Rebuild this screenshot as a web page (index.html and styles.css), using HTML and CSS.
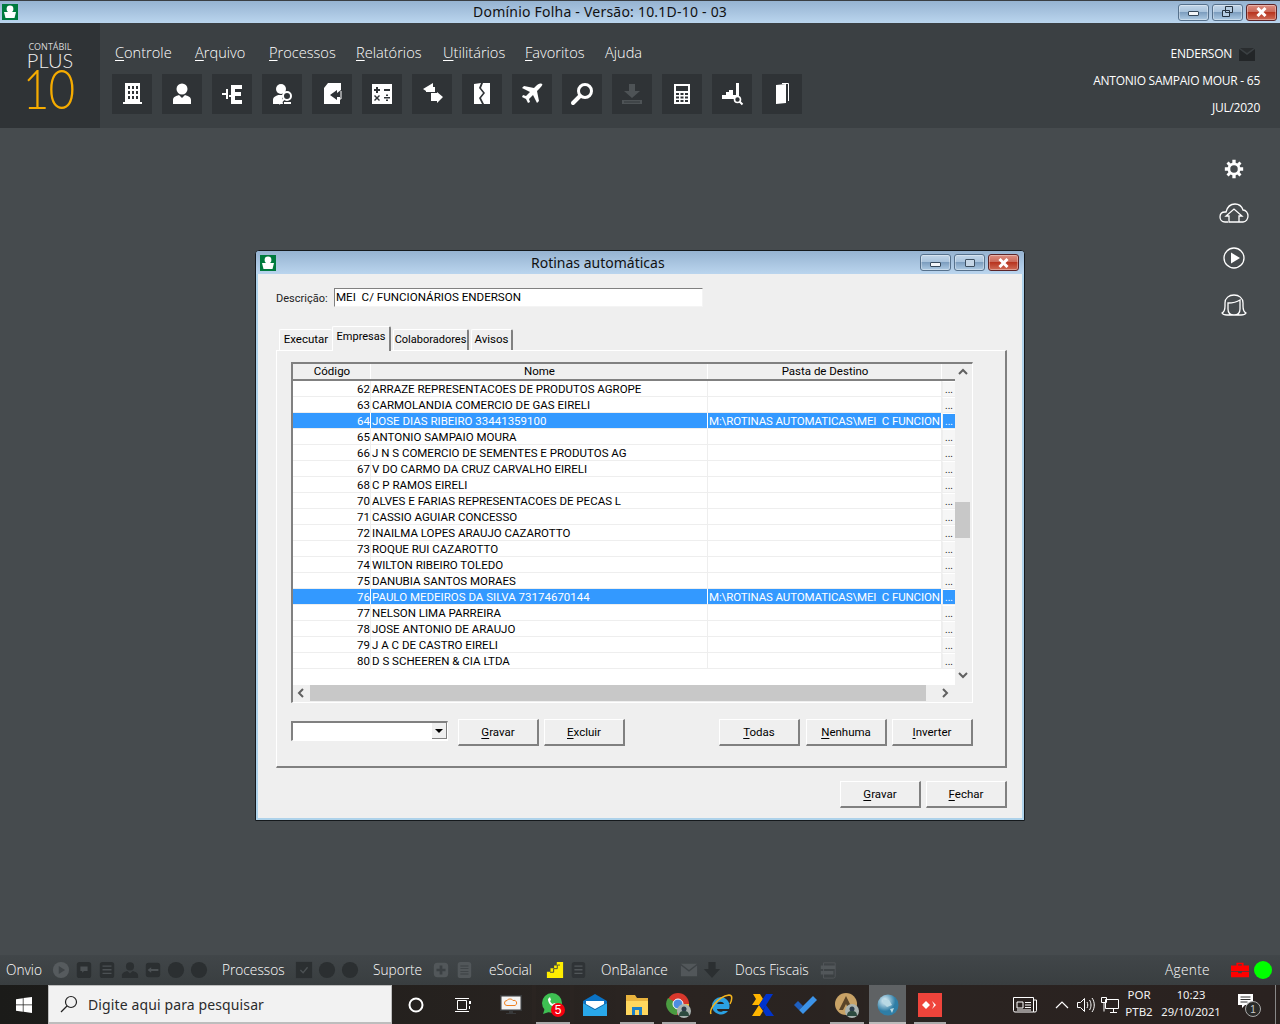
FILE: index.html
```html
<!DOCTYPE html>
<html lang="pt-BR">
<head>
<meta charset="utf-8">
<title>Domínio Folha</title>
<link rel="stylesheet" href="styles.css">
</head>
<body>
<div class="app">
  <div class="titlebar">
    <svg class="appicon" viewBox="0 0 16 16"><rect width="16" height="16" fill="#007a3d"/><circle cx="8" cy="5" r="3.4" fill="#fff"/><path d="M2 8h12l-1.5 6h-9z" fill="#fff"/></svg>
    <div class="title-text">Domínio Folha - Versão: 10.1D-10 - 03</div>
    <div class="winbtns">
      <div class="wb"><span class="wb-min"></span></div>
      <div class="wb"><svg width="14" height="12" viewBox="0 0 14 12"><path d="M4.500 .5h7v6h-7zM1.500 4.500h7v6h-7z" fill="#b6cde2" stroke="#26323f"/></svg></div>
      <div class="wb wb-close"><svg width="13" height="10" viewBox="0 0 13 10"><path d="M2.500 1l8 8M10.500 1l-8 8" stroke="#fff" stroke-width="3"/></svg></div>
    </div>
  </div>

  <header class="header">
    <div class="logo">
      <div class="logo-a">CONTÁBIL</div>
      <div class="logo-b">PLUS</div>
      <div class="logo-c">10</div>
    </div>
    <div class="menu-area">
      <nav class="menu">
        <span><u>C</u>ontrole</span><span><u>A</u>rquivo</span><span><u>P</u>rocessos</span><span><u>R</u>elatórios</span><span><u>U</u>tilitários</span><span><u>F</u>avoritos</span><span>Ajuda</span>
      </nav>
      <div class="tools">
        <div class="tool"><svg viewBox="0 0 40 40"><path fill="#fff" fill-rule="evenodd" d="M13 9h15v19h2v2H11v-2h2zM16 12v3h2v-3zM20 12v3h2v-3zM24 12v3h2v-3zM16 17v3h2v-3zM20 17v3h2v-3zM24 17v3h2v-3zM16 22v3h2v-3zM20 22v3h2v-3zM24 22v3h2v-3z"/></svg></div>
        <div class="tool"><svg viewBox="0 0 40 40"><circle cx="20" cy="15" r="5.500" fill="#fff"/><path fill="#fff" d="M11 30v-4c0-3 3-4 6-5l3 3 3-3c3 1 6 2 6 5v4z"/></svg></div>
        <div class="tool"><svg viewBox="0 0 40 40"><path fill="#fff" d="M19 11h11v4h-7v3h6v4h-6v4h7v4H19v-7h-2v-2h2zM10 19h4v-4h2v10h-2v-4h-4z"/></svg></div>
        <div class="tool"><svg viewBox="0 0 40 40"><circle cx="19" cy="15" r="5" fill="#fff"/><path fill="#fff" d="M11 30v-4c0-3 3-4 5-5h5l-1 5 1 4z"/><circle cx="25" cy="22" r="4" fill="none" stroke="#fff" stroke-width="2"/><path d="M22 25l-5 5" stroke="#fff" stroke-width="2"/><path fill="#fff" d="M22 28h7v2h-7z"/></svg></div>
        <div class="tool"><svg viewBox="0 0 40 40"><path fill="#fff" d="M16 9h13v7l-4 3v-3l-7 5 7 5v-3h3v7H12V14z"/><path fill="none" stroke="#fff" d="M29 17v8h-4"/></svg></div>
        <div class="tool"><svg viewBox="0 0 40 40"><path fill="#fff" fill-rule="evenodd" d="M10 10h20v20H10zM14 13v2h-2v2h2v2h2v-2h2v-2h-2v-2zM22 15v2h6v-2zM12 22l2 2-2 2 1 1 2-2 2 2 1-1-2-2 2-2-1-1-2 2-2-2zM22 23v1.500h6V23zM24 20.500v1.500h2v-1.500zM24 25.500v1.500h2v-1.500z"/></svg></div>
        <div class="tool"><svg viewBox="0 0 40 40"><path fill="#fff" d="M21 9l-10 6 3 2v1h9v-5h-2zM19 19h6v-1l6 5-6 6v-2h-6z"/></svg></div>
        <div class="tool"><svg viewBox="0 0 40 40"><path fill="#fff" d="M12 10l7-1-2 5 4 5-4 5 3 6-8 0zM21 9h7v21h-6l-3-6 4-5-4-5z"/></svg></div>
        <div class="tool"><svg viewBox="0 0 40 40"><path fill="#fff" d="M30 10c-2-1-4 0-6 2l-2 2-10-2-2 2 8 4-4 4-3-1-1 2 4 2 2 4 2-1-1-3 4-4 4 8 2-2-2-10 3-3c2-2 3-4 2-4z"/></svg></div>
        <div class="tool"><svg viewBox="0 0 40 40"><circle cx="23" cy="17" r="6.500" fill="none" stroke="#fff" stroke-width="3"/><path d="M18 22l-7 7" stroke="#fff" stroke-width="4" stroke-linecap="round"/></svg></div>
        <div class="tool"><svg viewBox="0 0 40 40"><path fill="#4e5356" d="M17 10h6v7h5l-8 7-8-7h5zM10 26h20v4H10z"/><path fill="#33383a" d="M12 27.500h16v1H12z"/></svg></div>
        <div class="tool"><svg viewBox="0 0 40 40"><path fill="#fff" fill-rule="evenodd" d="M12 10h16v20H12zM14 12v5h12v-5zM14 19v2h3v-2zM18.500 19v2h3v-2zM23 19v2h3v-2zM14 22.500v2h3v-2zM18.500 22.500v2h3v-2zM23 22.500v2h3v-2zM14 26v2h3v-2zM18.500 26v2h3v-2zM23 26v2h3v-2z"/></svg></div>
        <div class="tool"><svg viewBox="0 0 40 40"><path fill="#fff" d="M10 21h4v-3h3v-2h4v5h3V9h3v14H10v-2zM10 23h13v2H10z"/><circle cx="25.500" cy="25.500" r="3" fill="none" stroke="#fff" stroke-width="1.600"/><path d="M27.500 27.500l3 3" stroke="#fff" stroke-width="2"/></svg></div>
        <div class="tool"><svg viewBox="0 0 40 40"><path fill="#fff" d="M14 11l10-1v19l-10 1z"/><path fill="none" stroke="#fff" d="M20 9.500h6.500V27"/></svg></div>
      </div>
    </div>
    <div class="session">
      <div class="user">ENDERSON <svg class="mail" viewBox="0 0 16 13"><path fill="#232628" d="M0 1l8 6 8-6v12H0z"/><path fill="#2a2d2f" d="M1 0h14L8 5z"/></svg></div>
      <div>ANTONIO SAMPAIO MOUR - 65</div>
      <div>JUL/2020</div>
    </div>
  </header>

  <main class="desk">
    <div class="side">
      <svg class="s-gear" width="20" height="20" viewBox="0 0 24 24"><path fill="#fff" fill-rule="evenodd" d="M10 1h4v3.500l2 .8L18.500 3 21 5.500 18.700 8l.8 2H23v4h-3.500l-.8 2 2.300 2.500-2.500 2.500-2.500-2.300-2 .8V23h-4v-3.500l-2-.8L5.500 21 3 18.500 5.300 16l-.8-2H1v-4h3.500l.8-2L3 5.500 5.500 3 8 5.300l2-.8zM12 7.500a4.500 4.500 0 100 9 4.500 4.500 0 000-9z"/></svg>
      <svg class="s-cloud" width="30" height="20" viewBox="0 0 30 20"><path fill="none" stroke="#fff" stroke-width="1.300" d="M9 19H6c-3 0-5-2-5-5s2-5 5-5h1c1-4 4-8 9-8 4 0 7 3 8 6 3 0 5 3 5 6s-2 6-5 6h-6M10 19v-6H7l8-7 8 7h-3v6z"/></svg>
      <svg class="s-play" width="22" height="22" viewBox="0 0 22 22"><circle cx="11" cy="11" r="10" fill="none" stroke="#fff" stroke-width="1.300"/><path fill="#fff" d="M8 5.500l9 5.500-9 5.500z"/></svg>
      <svg class="s-head" width="26" height="22" viewBox="0 0 26 22"><path fill="none" stroke="#fff" stroke-width="1.300" d="M4 12V9c0-5 4-8 9-8s9 3 9 8v3c0 3 1 6 3 7-1 2-3 2-5 2H6c-2 0-4 0-5-2 2-1 3-4 3-7zM7 9c5 0 9-1 12-3v9c0 4-2 6-6 6s-6-2-6-6z"/></svg>
    </div>

    <section class="dialog">
      <div class="dlg-in">
        <div class="dlg-title">
          <svg class="appicon" viewBox="0 0 16 16"><rect width="16" height="16" fill="#007a3d"/><circle cx="8" cy="5" r="3.400" fill="#fff"/><path d="M2 8h12l-1.500 6h-9z" fill="#fff"/></svg>
          <div class="dlg-title-text">Rotinas automáticas</div>
          <div class="winbtns dlg-btns">
            <div class="wb"><span class="wb-min"></span></div>
            <div class="wb"><span class="wb-max"></span></div>
            <div class="wb wb-close"><svg width="13" height="10" viewBox="0 0 13 10"><path d="M2.500 1l8 8M10.500 1l-8 8" stroke="#fff" stroke-width="3"/></svg></div>
          </div>
        </div>
        <div class="dlg-body">
          <div class="desc-row"><label class="desc-label">Descrição:</label><div class="desc-input">MEI&nbsp; C/ FUNCIONÁRIOS ENDERSON</div></div>
          <div class="tabs">
            <div class="tab t1">Executar</div>
            <div class="tab t2">Empresas</div>
            <div class="tab t3">Colaboradores</div>
            <div class="tab t4">Avisos</div>
          </div>
          <div class="panel">
            <div class="tbl">
              <div class="tbl-main">
                <div class="row head"><div>Código</div><div>Nome</div><div>Pasta de Destino</div><div></div></div>
                <div class="row"><div class="c">62</div><div>ARRAZE REPRESENTACOES DE PRODUTOS AGROPE</div><div></div><div class="dots">...</div></div>
                <div class="row"><div class="c">63</div><div>CARMOLANDIA COMERCIO DE GAS EIRELI</div><div></div><div class="dots">...</div></div>
                <div class="row sel"><div class="c">64</div><div>JOSE DIAS RIBEIRO 33441359100</div><div class="path">M:\ROTINAS AUTOMATICAS\MEI&nbsp; C FUNCION</div><div class="dots">...</div></div>
                <div class="row"><div class="c">65</div><div>ANTONIO SAMPAIO MOURA</div><div></div><div class="dots">...</div></div>
                <div class="row"><div class="c">66</div><div>J N S COMERCIO DE SEMENTES E PRODUTOS AG</div><div></div><div class="dots">...</div></div>
                <div class="row"><div class="c">67</div><div>V DO CARMO DA CRUZ CARVALHO EIRELI</div><div></div><div class="dots">...</div></div>
                <div class="row"><div class="c">68</div><div>C P RAMOS EIRELI</div><div></div><div class="dots">...</div></div>
                <div class="row"><div class="c">70</div><div>ALVES E FARIAS REPRESENTACOES DE PECAS L</div><div></div><div class="dots">...</div></div>
                <div class="row"><div class="c">71</div><div>CASSIO AGUIAR CONCESSO</div><div></div><div class="dots">...</div></div>
                <div class="row"><div class="c">72</div><div>INAILMA LOPES ARAUJO CAZAROTTO</div><div></div><div class="dots">...</div></div>
                <div class="row"><div class="c">73</div><div>ROQUE RUI CAZAROTTO</div><div></div><div class="dots">...</div></div>
                <div class="row"><div class="c">74</div><div>WILTON RIBEIRO TOLEDO</div><div></div><div class="dots">...</div></div>
                <div class="row"><div class="c">75</div><div>DANUBIA SANTOS MORAES</div><div></div><div class="dots">...</div></div>
                <div class="row sel"><div class="c">76</div><div>PAULO MEDEIROS DA SILVA 73174670144</div><div class="path">M:\ROTINAS AUTOMATICAS\MEI&nbsp; C FUNCION</div><div class="dots">...</div></div>
                <div class="row"><div class="c">77</div><div>NELSON LIMA PARREIRA</div><div></div><div class="dots">...</div></div>
                <div class="row"><div class="c">78</div><div>JOSE ANTONIO DE ARAUJO</div><div></div><div class="dots">...</div></div>
                <div class="row"><div class="c">79</div><div>J A C DE CASTRO EIRELI</div><div></div><div class="dots">...</div></div>
                <div class="row"><div class="c">80</div><div>D S SCHEEREN &amp; CIA LTDA</div><div></div><div class="dots">...</div></div>
              </div>
              <div class="vbar">
                <svg class="arrow" viewBox="0 0 16 16"><path d="M4 10l4-4 4 4" fill="none" stroke="#606060" stroke-width="2"/></svg>
                <div class="vthumb"></div>
                <svg class="arrow arrow-end" viewBox="0 0 16 16"><path d="M4 6l4 4 4-4" fill="none" stroke="#606060" stroke-width="2"/></svg>
              </div>
              <div class="hbar">
                <svg class="arrow" viewBox="0 0 16 16"><path d="M10 4l-4 4 4 4" fill="none" stroke="#606060" stroke-width="2"/></svg>
                <div class="hthumb"></div>
                <svg class="arrow arrow-r" viewBox="0 0 16 16"><path d="M6 4l4 4-4 4" fill="none" stroke="#606060" stroke-width="2"/></svg>
              </div>
            </div>
            <div class="actions">
              <div class="combo"><span class="combo-btn"></span></div>
              <button class="btn"><u>G</u>ravar</button>
              <button class="btn"><u>E</u>xcluir</button>
              <div class="grow"></div>
              <button class="btn"><u>T</u>odas</button>
              <button class="btn b-nenhuma"><u>N</u>enhuma</button>
              <button class="btn"><u>I</u>nverter</button>
            </div>
          </div>
          <div class="footer-btns">
            <button class="btn"><u>G</u>ravar</button>
            <button class="btn"><u>F</u>echar</button>
          </div>
        </div>
      </div>
    </section>
  </main>

  <div class="statusbar">
    <span class="lbl l-onvio">Onvio</span>
    <svg class="si" viewBox="0 0 20 20"><circle cx="10" cy="10" r="9" fill="#565b5e"/><path fill="#3f4447" d="M7.500 5.500l7 4.500-7 4.500z"/></svg>
    <svg class="si" viewBox="0 0 20 20"><rect x="2" y="1" width="16" height="18" rx="3" fill="#2b2f31"/><path fill="#4c5154" d="M6 6h8v5h-4l-2 2v-2H6z"/></svg>
    <svg class="si" viewBox="0 0 20 20"><rect x="2" y="1" width="16" height="18" rx="3" fill="#2b2f31"/><path fill="#4c5154" d="M5 5h10v1.500H5zM5 9h10v1.500H5zM5 13h10v1.500H5z"/></svg>
    <svg class="si" viewBox="0 0 20 20"><circle cx="10" cy="6" r="4.500" fill="#2b2f31"/><path fill="#2b2f31" d="M1 19v-3c0-3 3-4 6-5l3 3 3-3c3 1 6 2 6 5v3z"/></svg>
    <svg class="si" viewBox="0 0 20 20"><rect x="2" y="2" width="16" height="16" rx="3" fill="#2b2f31"/><path fill="#4c5154" d="M4 10l4-3v2h8v2H8v2z"/></svg>
    <svg class="si" viewBox="0 0 20 20"><circle cx="10" cy="10" r="9" fill="#2b2f31"/></svg>
    <svg class="si" viewBox="0 0 20 20"><circle cx="10" cy="10" r="9" fill="#2b2f31"/></svg>
    <span class="lbl l-proc">Processos</span>
    <svg class="si" viewBox="0 0 20 20"><rect x="1" y="1" width="18" height="18" fill="#2b2f31"/><path d="M6 10l3 3 5-6" fill="none" stroke="#4c5154" stroke-width="1.500"/></svg>
    <svg class="si" viewBox="0 0 20 20"><circle cx="10" cy="10" r="9" fill="#2b2f31"/></svg>
    <svg class="si" viewBox="0 0 20 20"><circle cx="10" cy="10" r="9" fill="#2b2f31"/></svg>
    <span class="lbl l-sup">Suporte</span>
    <svg class="si" viewBox="0 0 20 20"><rect x="2" y="2" width="16" height="16" rx="4" fill="#52575a"/><path fill="#3b4043" d="M8.500 5h3v3.500H15v3h-3.500V15h-3v-3.500H5v-3h3.500z"/></svg>
    <svg class="si" viewBox="0 0 20 20"><rect x="3" y="1" width="15" height="18" rx="3" fill="#52575a"/><path fill="#3b4043" d="M6 5h9v1H6zM6 8h9v1H6zM6 11h9v1H6zM6 14h9v1H6z"/></svg>
    <span class="lbl l-eso">eSocial</span>
    <svg class="si" viewBox="0 0 20 20"><path fill="#ffed00" d="M1 19v-7h4V8h4V5h3V1h7v18z"/><path fill="none" stroke="#3b4043" d="M4.500 12.500h4v-4h4v-4h3"/></svg>
    <svg class="si" viewBox="0 0 20 20"><rect x="3" y="1" width="15" height="18" rx="3" fill="#2f3336"/><path fill="#52575a" d="M6 5h9v1.500H6zM6 9h9v1.500H6zM6 13h9v1.500H6z"/></svg>
    <span class="lbl l-onb">OnBalance</span>
    <svg class="si" viewBox="0 0 20 20"><path fill="#52575a" d="M1 3h18l-9 7zM1 5l9 7 9-7v12H1z"/></svg>
    <svg class="si" viewBox="0 0 20 20"><path fill="#2b2f31" d="M6 1h8v8h5l-9 10-9-10h5z"/></svg>
    <span class="lbl l-doc">Docs Fiscais</span>
    <svg class="si" viewBox="0 0 20 20"><path fill="none" stroke="#52575a" d="M5 2h13v15a2 2 0 01-2 2H5z"/><path fill="#52575a" d="M2 5h16v4H2zM2 11h14v4H2z"/></svg>
    <div class="grow"></div>
    <span class="lbl l-age">Agente</span>
    <svg class="si si-red" viewBox="0 0 20 20"><path fill="#fe0000" fill-rule="evenodd" d="M6 2h8v3h6v6H0V5h6zM8 3.500V5h4V3.500zM0 12h8v1.500h4V12h8v6H0z"/></svg>
    <svg class="si si-green" viewBox="0 0 20 20"><circle cx="10" cy="10" r="10" fill="#00ff00"/></svg>
  </div>

  <footer class="taskbar">
    <div class="start"><svg width="16" height="16" viewBox="0 0 16 16"><path fill="#fff" d="M0 2.200l6.800-1v6.300H0zM7.500 1.100L16 0v7.500H7.500zM0 8.300h6.800v6.500l-6.800-1zM7.500 8.300H16V16l-8.500-1.200z"/></svg></div>
    <div class="search">
      <svg width="20" height="20" viewBox="0 0 20 20"><circle cx="12" cy="8" r="5.500" fill="none" stroke="#222" stroke-width="1.200"/><path d="M8 12l-6 6" stroke="#222" stroke-width="1.200"/></svg>
      <span>Digite aqui para pesquisar</span>
    </div>
    <div class="tb tb1"><svg width="16" height="16" viewBox="0 0 16 16"><circle cx="8" cy="8" r="6.500" fill="none" stroke="#fff" stroke-width="2"/></svg></div>
    <div class="tb tb2"><svg width="18" height="16" viewBox="0 0 18 16"><path fill="none" stroke="#fff" d="M3.500 3.500h9v9h-9zM1 1.500h14M1 14.500h14"/><path fill="#fff" d="M15 4h2v3h-2zM15 9h1v3h-1z"/></svg></div>
    <div class="tb"><svg width="24" height="24" viewBox="0 0 24 24"><rect x="1" y="2" width="22" height="16" fill="#38393a"/><rect x="2.500" y="3.500" width="19" height="13" fill="#f4f4f4"/><path d="M8 12.500a2.500 2.500 0 010-5c1-2 5-2 6 0a2.500 2.500 0 012 5z" fill="none" stroke="#f08020"/><path fill="#38393a" d="M10 18h4v2h3v1H7v-1h3z"/></svg></div>
    <div class="tb on"><svg width="26" height="26" viewBox="0 0 26 26"><circle cx="12" cy="11" r="10" fill="#3ebf52"/><path d="M3 22l2-6 4 4z" fill="#3ebf52"/><path d="M8 7c0 5 4 8 8 8l1-3-3-1-1 1c-1 0-2-1-3-3l1-1-1-3z" fill="#fff"/><circle cx="18" cy="18" r="7" fill="#f4000f"/><text x="18" y="22" class="badge5">5</text></svg></div>
    <div class="tb"><svg width="24" height="22" viewBox="0 0 24 22"><path fill="#0a72c4" d="M0 7l12-7 12 7v2L12 16 0 9z"/><path fill="#fff" d="M3 7h18v3l-9 5-9-5z"/><path fill="#29a8ea" d="M0 9l12 7 12-7v13H0z"/></svg></div>
    <div class="tb on"><svg width="24" height="20" viewBox="0 0 24 20"><path fill="#e9b33d" d="M1 0h9l2 3h11v17H1z"/><path fill="#ffd75e" d="M1 6h22v14H1z"/><path fill="#1c80c8" d="M7 12h10v8h-3v-5h-4v5H7z"/></svg></div>
    <div class="tb on"><svg width="26" height="26" viewBox="0 0 26 26"><circle cx="12" cy="12" r="11" fill="#d8382c"/><path fill="#4a9b40" d="M12 12L2 6a11 11 0 000 12 11 11 0 009 5z"/><path fill="#f8c92a" d="M12 12h11a11 11 0 01-9 11z"/><circle cx="12" cy="12" r="5" fill="#4e8de0" stroke="#fff"/><circle cx="18" cy="19" r="7" fill="#aab3b0"/><circle cx="18" cy="17" r="2.500" fill="#2c3d4c"/><path fill="#2c4a3f" d="M13 24c0-4 2-5 5-5s5 1 5 5z"/></svg></div>
    <div class="tb"><svg width="24" height="24" viewBox="0 0 24 24"><path fill="#2ba1e2" d="M12 4a9 9 0 00-9 9 9 9 0 0016 5h-5c-3 2-6 0-6-2h12a9 9 0 00-8-12zM8 11c1-3 6-3 7 0z"/><path fill="none" stroke="#f4b41e" stroke-width="1.500" d="M2 21C0 17 8 4 20 2c4 0 3 5 1 9"/></svg></div>
    <div class="tb"><svg width="24" height="22" viewBox="0 0 24 22"><path fill="#ffb500" d="M2 0h7l3 5-4 6H1l4-6zM8 11l4 6-3 5H1z"/><path fill="#0033cc" d="M15 0h7l-10 16-4-5zM15 11l8 11h-8l-3-5z"/></svg></div>
    <div class="tb"><svg width="24" height="18" viewBox="0 0 24 18"><path fill="#1e5fbf" d="M1 9l4-4 5 5-4 4z"/><path fill="#3c93e8" d="M6 14l14-14 4 4-14 14z"/></svg></div>
    <div class="tb on"><svg width="26" height="26" viewBox="0 0 26 26"><circle cx="12" cy="12" r="11" fill="#c8a266"/><path fill="#5a4428" d="M12 4l7 14h-4l-3-6-3 6H5z"/><circle cx="18" cy="19" r="7" fill="#aab3b0"/><circle cx="18" cy="17" r="2.500" fill="#2c3d4c"/><path fill="#2c4a3f" d="M13 24c0-4 2-5 5-5s5 1 5 5z"/></svg></div>
    <div class="tb cur"><svg width="22" height="22" viewBox="0 0 22 22"><defs><radialGradient id="g" cx=".35" cy=".3"><stop offset="0" stop-color="#e8f6fb"/><stop offset="1" stop-color="#2f7ea6"/></radialGradient></defs><circle cx="11" cy="11" r="10.500" fill="url(#g)"/><path fill="#b8d9e4" d="M6 5l6 1 3 5-5 2-4-4zM13 15l4-1-2 5z"/></svg></div>
    <div class="tb tb-any"><svg width="24" height="24" viewBox="0 0 24 24"><rect width="24" height="24" fill="#ef443b"/><path fill="#fff" d="M8 8l4 4-4 4-4-4zM14 8l4 4-4 4 2-4z"/></svg></div>
    <div class="grow"></div>
    <div class="tray">
      <svg class="t-news" width="24" height="16" viewBox="0 0 24 16"><path fill="none" stroke="#fff" d="M.5.500h20v14.500H2a1.500 1.500 0 01-1.500-1.500zM20.500 3h3v10.500a1.500 1.500 0 01-1.500 1.500h-1.500"/><path fill="none" stroke="#fff" d="M4 5h6v6H4z"/><path stroke="#fff" d="M12 5.500h6M12 8h6M12 10.500h6M4 13h14"/></svg>
      <svg class="t-up" width="14" height="8" viewBox="0 0 14 8"><path d="M1 7l6-6 6 6" fill="none" stroke="#fff" stroke-width="1.200"/></svg>
      <svg class="t-vol" width="18" height="16" viewBox="0 0 18 16"><path fill="none" stroke="#fff" d="M.5 5.500h3l4-4v13l-4-4h-3zM10 5c1 2 1 4 0 6M12.500 3c2 3 2 7 0 10M15 1c3 4 3 10 0 14"/></svg>
      <svg class="t-net" width="18" height="16" viewBox="0 0 18 16"><path fill="none" stroke="#fff" d="M4.500 2.500h13v9h-13zM9 15.500h7M12.500 11.500v4M.5.500h5v5h-5zM3 5.500v9"/></svg>
      <div class="lang"><div>POR</div><div>PTB2</div></div>
      <div class="clock"><div>10:23</div><div>29/10/2021</div></div>
      <svg class="t-note" width="26" height="24" viewBox="0 0 26 24"><path fill="#fff" d="M1 1h15v11H8l-3 3v-3H1z"/><path stroke="#333" d="M3.500 4h10M3.500 6.500h10M3.500 9h7"/><circle cx="16" cy="16" r="7.500" fill="#2a2a28" stroke="#aaa"/><text x="16" y="20" class="note1">1</text></svg>
      <div class="show-desk"></div>
    </div>
  </footer>
</div>
</body>
</html>
```

FILE: styles.css
```css
* { box-sizing: border-box; }
html, body { margin: 0; padding: 0; }
body { width: 1280px; height: 1024px; overflow: hidden; font-family: "Open Sans", "Noto Sans", sans-serif; }
.app { width: 1280px; height: 1024px; display: flex; flex-direction: column; }
.grow { flex: 1; }
u { text-decoration: underline; text-underline-offset: 2px; text-decoration-thickness: 1px; }

/* title bars */
.titlebar { height: 23px; flex: none; display: flex; align-items: center; position: relative; border-top: 1px solid #3a3e42; background: linear-gradient(#96b3d1, #bad5ee); padding-left: 2px; }
.appicon { width: 16px; height: 16px; flex: none; }
.title-text { position: absolute; left: 473px; top: 2px; font-family: "Noto Sans", sans-serif; font-size: 14px; line-height: 18px; color: #111; white-space: nowrap; letter-spacing: .22px; }
.winbtns { margin-left: auto; display: flex; gap: 3px; padding-right: 3px; }
.wb { width: 31px; height: 17px; border: 1px solid #56718c; border-radius: 3px; background: linear-gradient(#c2d6e9 0%, #a9c3dc 45%, #7d9ebf 50%, #aecbe4 100%); display: flex; align-items: center; justify-content: center; box-shadow: inset 0 0 0 1px rgba(255,255,255,.35); }
.wb-close { background: linear-gradient(#dd8d80 0%, #ca6a5a 45%, #b83520 50%, #cf6c57 100%); border-color: #5c2428; }
.wb-min { width: 11px; height: 5px; background: #f4f7fa; border: 1px solid #36495c; border-radius: 1px; margin-top: 3px; }
.wb-max { width: 10px; height: 8px; border: 1.500px solid #3d4f60; border-radius: 1px; background: #c5d6e6; }

/* header */
.header { height: 105px; flex: none; display: flex; background: #3b4043; color: #fff; }
.logo { width: 100px; flex: none; background: #2f3336; display: flex; flex-direction: column; align-items: center; padding-top: 18px; }
.logo-a { font-family: "Open Sans", sans-serif; font-size: 9px; line-height: 11px; color: #d8d8d8; }
.logo-b { font-family: "Lato", sans-serif; font-weight: 300; font-size: 20px; line-height: 17px; color: #f0f0f0; }
.logo-c { font-family: "Lato", sans-serif; font-weight: 300; font-size: 56px; line-height: 41px; color: #f5ab00; letter-spacing: -1px; transform: translate(-2px, -2px) scaleX(.82); }
.menu-area { display: flex; flex-direction: column; padding-left: 12px; }
.menu { display: grid; grid-template-columns: 80px 74px 87px 87px 82px 80px auto; height: 51px; padding: 18px 0 0 3px; font-weight: 300; font-size: 14.600px; line-height: 22px; white-space: nowrap; }
.tools { display: flex; gap: 10px; }
.tool { width: 40px; height: 40px; background: #2f3336; }
.tool svg { display: block; width: 40px; height: 40px; }
.session { margin-left: auto; padding: 22px 20px 0 0; display: flex; flex-direction: column; align-items: flex-end; gap: 9px; font-size: 12px; line-height: 18px; font-weight: 400; letter-spacing: -.25px; white-space: nowrap; }
.user { display: flex; align-items: center; gap: 7px; margin-right: 5px; }
.mail { width: 16px; height: 13px; }

/* desktop */
.desk { flex: 1; position: relative; background: #464b4e; display: flex; justify-content: flex-end; }
.side { width: 92px; display: flex; flex-direction: column; align-items: center; padding-top: 31px; }
.side svg { display: block; flex: none; }
.s-cloud { margin-top: 24px; }
.s-play { margin-top: 24px; }
.s-head { margin-top: 25px; }

/* dialog */
.dialog { position: absolute; left: 255px; top: 122px; width: 770px; height: 571px; border: 1px solid #15191c; border-radius: 4px 4px 0 0; background: #aed2ea; }
.dlg-in { height: 100%; padding: 0 2px 2px 2px; display: flex; flex-direction: column; }
.dlg-title { height: 23px; margin: 0 -2px; padding-left: 4px; flex: none; display: flex; align-items: center; position: relative; background: linear-gradient(#96b3d1, #bad5ee); border-radius: 3px 3px 0 0; }
.dlg-title-text { position: absolute; left: 275px; top: 3px; font-family: "Noto Sans", sans-serif; font-size: 14px; line-height: 18px; color: #111; white-space: nowrap; }
.dlg-btns { padding-right: 5px; }
.dlg-body { flex: 1; background: #efefef; padding: 14px 16px 0 18px; font-family: "Roboto", "Liberation Sans", sans-serif; font-size: 11.500px; color: #000; }

.desc-row { display: flex; align-items: center; height: 19px; }
.desc-label { width: 58px; flex: none; font-size: 11px; padding-top: 1px; color: #222; }
.desc-input { width: 369px; height: 19px; background: #fff; border: 1px solid #f4f4f4; border-top: 1px solid #808080; border-left: 1px solid #808080; padding-left: 1px; line-height: 16px; font-size: 11.600px; white-space: nowrap; }

.tabs { display: flex; height: 23px; margin-top: 20px; padding-left: 3px; align-items: flex-end; flex: none; }
.tab { height: 21px; flex: none; background: #efefef; border-top: 1px solid #fff; border-left: 1px solid #fff; border-right: 2px solid #808080; border-radius: 2px 2px 0 0; text-align: center; line-height: 19px; font-size: 11.500px; white-space: nowrap; }
.t1 { width: 53px; border-right: 0; }
.t2 { width: 59px; height: 25px; margin-bottom: -1px; line-height: 20px; position: relative; padding-bottom: 4px; font-size: 11px; }
.t3 { width: 76px; margin-left: 2px; font-size: 11px; }
.t4 { width: 42px; margin-left: 2px; }

.panel { height: 418px; width: 731px; border-top: 1px solid #fff; border-left: 1px solid #fff; border-right: 2px solid #808080; border-bottom: 2px solid #808080; padding: 11px 0 0 14px; }
.tbl { width: 682px; height: 341px; border-top: 2px solid #808080; border-left: 2px solid #808080; border-right: 1px solid #fff; border-bottom: 1px solid #fff; display: grid; grid-template-columns: 662px 16px; grid-template-rows: 321px 16px; background: #efefef; }
.tbl-main { background: #fff; overflow: hidden; }
.row { display: grid; grid-template-columns: 78px 337px 234px 13px; height: 16px; border-bottom: 1px solid #eeeeee; font-size: 11.500px; line-height: 16px; white-space: nowrap; }
.row > div { overflow: hidden; padding-left: 1px; border-right: 1px solid #eee; }
.row > .c { text-align: right; padding: 0; }
.row > .path { letter-spacing: -.12px; }
.row > .dots { border: 0; border-left: 1px solid #eee; background: #f6f6f6; color: #222; line-height: 16px; padding-left: 2px; font-size: 10px; border-top: 1px solid #fff; }
.head { height: 17px; background: #efefef; border-bottom: 2px solid #808080; text-align: center; font-size: 11.500px; line-height: 15px; }
.head > div { border-right: 1px solid #fff; }
.head > div:nth-child(4) { border: 0; }
.sel { background: #3399ff; color: #fff; }
.sel > div { border-right-color: #fff; }
.sel > .dots { background: #3399ff; color: #fff; }
.vbar { display: flex; flex-direction: column; background: #efefef; }
.arrow { width: 16px; height: 16px; flex: none; display: block; }
.arrow-end { margin-top: auto; margin-bottom: 2px; }
.vthumb { width: 15px; height: 36px; background: #c8c8c8; margin-top: 122px; }
.hbar { display: flex; background: #efefef; }
.hthumb { width: 616px; background: #c8c8c8; margin-left: 1px; }
.arrow-r { margin-left: auto; margin-right: 2px; }

.actions { display: flex; margin-top: 16px; height: 27px; width: 682px; align-items: flex-start; }
.combo { width: 157px; height: 20px; margin-top: 2px; margin-right: 10px; background: #fff; border: 1px solid #fff; border-top: 2px solid #808080; border-left: 2px solid #808080; display: flex; justify-content: flex-end; }
.combo-btn { width: 15px; height: 16px; background: #efefef; border-right: 1px solid #808080; border-bottom: 1px solid #808080; position: relative; }
.combo-btn::after { content: ""; position: absolute; left: 3px; top: 6px; border: 4px solid transparent; border-top: 4px solid #000; }
.btn { width: 81px; height: 27px; padding: 0; margin: 0 0 0 5px; background: #efefef; border-top: 1px solid #fff; border-left: 1px solid #fff; border-right: 2px solid #808080; border-bottom: 2px solid #808080; font-family: "Roboto", "Liberation Sans", sans-serif; font-size: 11.500px; color: #000; }
.actions .combo + .btn { margin-left: 0; }
.actions .grow + .btn { margin-left: 0; }
.actions .b-nenhuma { margin-left: 6px; }
.footer-btns { display: flex; justify-content: flex-end; margin-top: 13px; width: 731px; }

/* status bar */
.statusbar { height: 30px; flex: none; background: linear-gradient(#414649, #393e40); display: flex; align-items: center; padding-left: 6px; color: #fff; font-weight: 300; font-size: 13.700px; white-space: nowrap; }
.si { width: 18px; height: 18px; margin-left: 5px; flex: none; }
.lbl + .si { margin-left: 0; }
.lbl { line-height: 20px; flex: none; }
.l-onvio { width: 46px; }
.l-proc { width: 73px; margin-left: 14px; }
.l-sup { width: 59px; margin-left: 14px; }
.l-eso { width: 57px; margin-left: 16px; }
.l-onb { width: 79px; margin-left: 14px; }
.l-doc { width: 84px; margin-left: 14px; }
.l-age { width: 66px; letter-spacing: .3px; }
.si-green { margin-right: 8px; }

/* taskbar */
.taskbar { height: 39px; flex: none; background: linear-gradient(90deg, #1b1b19, #2a2421 50%, #2a2220); display: flex; align-items: stretch; color: #fff; }
.start { width: 48px; display: flex; align-items: center; justify-content: center; }
.search { width: 344px; background: #f2f2f2; border: 1px solid #bdbdbd; border-bottom-width: 2px; display: flex; align-items: center; gap: 9px; padding-left: 10px; font-family: "Noto Sans", sans-serif; font-size: 14px; color: #2b2b2b; letter-spacing: .12px; }
.tb { width: 42px; display: flex; align-items: center; justify-content: center; flex: none; }
.tb1 { width: 48px; }
.tb2 { width: 50px; padding-right: 4px; }
.on { box-shadow: inset 4px 0 0 #2a2421, inset -4px 0 0 #2a2421, inset 0 -2px 0 #aaa; }
.cur { background: #5f6264; width: 37px; margin: 0 8px 0 1px; box-shadow: inset 0 -2px 0 #bbb; }
.tb-any { width: 32px; box-shadow: inset 0 -2px 0 #aaa; }
.badge5 { font-family: "Liberation Sans", sans-serif; font-size: 12px; fill: #fff; text-anchor: middle; }
.note1 { font-family: "Liberation Sans", sans-serif; font-size: 10px; fill: #ccc; text-anchor: middle; }
.tray { display: flex; align-items: center; }
.t-up { margin-left: 18px; }
.t-vol { margin-left: 8px; }
.t-net { margin-left: 6px; }
.lang { width: 40px; padding-bottom: 3px; text-align: center; font-size: 11.500px; line-height: 17px; color: #f2f2f2; font-family: "Noto Sans", sans-serif; }
.clock { width: 64px; padding-bottom: 3px; text-align: center; font-size: 11.200px; line-height: 17px; color: #f2f2f2; font-family: "Noto Sans", sans-serif; }
.t-note { margin-left: 14px; margin-right: 12px; }
.show-desk { width: 5px; height: 39px; border-left: 1px solid #888; }
```
